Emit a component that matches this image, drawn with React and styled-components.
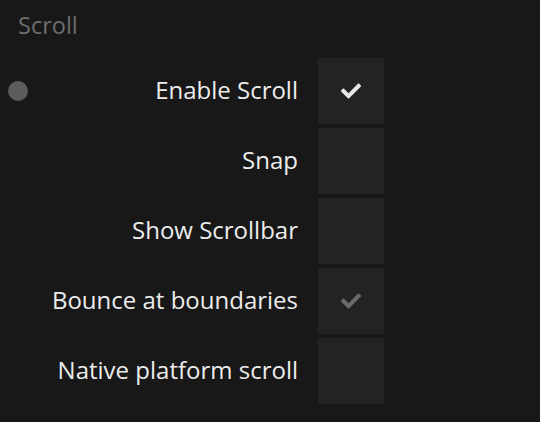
import React from 'react';
import styled, { createGlobalStyle } from 'styled-components';
import { FaCheck } from 'react-icons/fa';

const GlobalStyle = createGlobalStyle`
  html, body {
    margin: 0;
    padding: 0;
    background: #181818;
  }
  body {
    font-family: 'Open Sans', 'Noto Sans', sans-serif;
  }
`;

const Panel = styled.div`
  width: 540px;
  height: 422px;
  background: #181818;
  box-sizing: border-box;
  padding: 9px 0 0 0;
`;

const Title = styled.div`
  color: #6e6e6e;
  font-size: 23.5px;
  line-height: 32px;
  padding-left: 18px;
  margin-bottom: 17px;
`;

const List = styled.div`
  display: flex;
  flex-direction: column;
  gap: 4px;
`;

const Row = styled.div`
  display: grid;
  grid-template-columns: 36px 1fr 66px;
  align-items: center;
  width: 384px;
  height: 66px;
`;

const Dot = styled.span`
  width: 20px;
  height: 20px;
  border-radius: 50%;
  background: #5c5c5c;
  margin-left: 8px;
  visibility: ${p => (p.$show ? 'visible' : 'hidden')};
`;

const Label = styled.span`
  color: #ececec;
  font-size: 24px;
  text-align: right;
  padding-right: 20px;
  padding-bottom: 3px;
  white-space: nowrap;
`;

const Box = styled.div`
  width: 66px;
  height: 66px;
  background: #232323;
  display: flex;
  align-items: center;
  justify-content: center;
  color: ${p => (p.$dim ? '#6a6a6a' : '#e6e6e6')};
  svg {
    font-size: 20px;
  }
`;

const items = [
  { label: 'Enable Scroll', checked: true, dot: true },
  { label: 'Snap' },
  { label: 'Show Scrollbar' },
  { label: 'Bounce at boundaries', checked: true, dim: true },
  { label: 'Native platform scroll' },
];

export default function App() {
  return (
    <Panel>
      <GlobalStyle />
      <Title>Scroll</Title>
      <List>
        {items.map(item => (
          <Row key={item.label}>
            <Dot $show={item.dot} />
            <Label>{item.label}</Label>
            <Box $dim={item.dim}>{item.checked && <FaCheck />}</Box>
          </Row>
        ))}
      </List>
    </Panel>
  );
}
